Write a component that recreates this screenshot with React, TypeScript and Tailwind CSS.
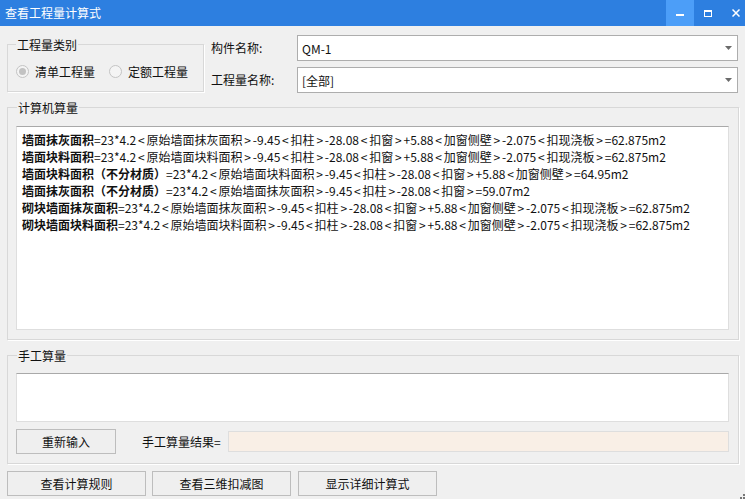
import React from "react";

const formulaLines: { name: string; expr: string }[] = [
  {
    name: "墙面抹灰面积",
    expr: "=23*4.2<原始墙面抹灰面积>-9.45<扣柱>-28.08<扣窗>+5.88<加窗侧壁>-2.075<扣现浇板>=62.875m2",
  },
  {
    name: "墙面块料面积",
    expr: "=23*4.2<原始墙面块料面积>-9.45<扣柱>-28.08<扣窗>+5.88<加窗侧壁>-2.075<扣现浇板>=62.875m2",
  },
  {
    name: "墙面块料面积（不分材质）",
    expr: "=23*4.2<原始墙面块料面积>-9.45<扣柱>-28.08<扣窗>+5.88<加窗侧壁>=64.95m2",
  },
  {
    name: "墙面抹灰面积（不分材质）",
    expr: "=23*4.2<原始墙面抹灰面积>-9.45<扣柱>-28.08<扣窗>=59.07m2",
  },
  {
    name: "砌块墙面抹灰面积",
    expr: "=23*4.2<原始墙面抹灰面积>-9.45<扣柱>-28.08<扣窗>+5.88<加窗侧壁>-2.075<扣现浇板>=62.875m2",
  },
  {
    name: "砌块墙面块料面积",
    expr: "=23*4.2<原始墙面块料面积>-9.45<扣柱>-28.08<扣窗>+5.88<加窗侧壁>-2.075<扣现浇板>=62.875m2",
  },
];

const Expr = ({ text }: { text: string }) => (
  <>
    {text.split(/([<>])/).map((part, i) =>
      part === "<" || part === ">" ? (
        <span key={i} className="px-[1.8px]">
          {part}
        </span>
      ) : (
        <span key={i}>{part}</span>
      )
    )}
  </>
);

const Caret = () => (
  <svg width="7" height="4" viewBox="0 0 7 4">
    <path d="M0 0h7L3.5 4z" fill="#6b6b6b" />
  </svg>
);

const Combo = ({ value }: { value: string }) => (
  <div className="w-[441px] h-[26px] bg-white border border-[#adadad] flex items-center pl-[4px] pr-[5px]">
    <span className="flex-1 text-[12px] leading-[17px] text-[#111]">{value}</span>
    <Caret />
  </div>
);

const Radio = ({ checked, label }: { checked?: boolean; label: string }) => (
  <div className="flex items-center h-[17px] whitespace-nowrap shrink-0">
    <span className="w-[13px] h-[13px] rounded-full border border-[#c4c4c4] bg-[#f4f4f4] flex items-center justify-center">
      {checked && <span className="w-[7px] h-[7px] rounded-full bg-[#c2c2c2]" />}
    </span>
    <span className="ml-[6px] text-[12px] text-[#111]">{label}</span>
  </div>
);

const Btn = ({ label, className }: { label: string; className: string }) => (
  <button
    className={
      "h-[25px] border border-[#bdbdbd] bg-[#efefef] text-[12px] text-[#111] flex items-center justify-center " +
      className
    }
  >
    {label}
  </button>
);

const App = () => {
  return (
    <div
      className="w-[745px] h-[499px] bg-[#f0f0f0] flex flex-col overflow-hidden relative"
      style={{ fontFamily: '"Microsoft YaHei", "Noto Sans CJK SC", sans-serif' }}
    >
      {/* title bar */}
      <div className="h-[26px] bg-[#2d7fe0] flex items-center shrink-0">
        <span className="pl-[5px] text-white text-[12px] flex-1">查看工程量计算式</span>
        <div className="w-[28px] h-[26px] bg-[#4c9ef8] flex items-center justify-center">
          <span className="w-[8px] h-[2px] bg-white mt-[4px]" />
        </div>
        <div className="w-[28px] h-[26px] flex items-center justify-center">
          <span className="w-[8px] h-[7px] border border-white border-t-2" />
        </div>
        <div className="w-[23px] h-[26px] flex items-center justify-end pr-[5px]">
          <svg width="8" height="8" viewBox="0 0 8 8">
            <path d="M0.5 0.5L7.5 7.5M7.5 0.5L0.5 7.5" stroke="#fff" strokeWidth="1.5" />
          </svg>
        </div>
      </div>

      <div className="flex flex-col px-[7px]">
        {/* top row */}
        <div className="flex items-start mt-[9px]">
          <fieldset className="w-[198px] h-[56px] mt-[1px] border border-[#d8d8d8] shadow-[1px_1px_0_#fff] pl-[8px]">
            <legend className="ml-[0px] px-[1px] text-[12px] leading-[17px] text-[#111]">工程量类别</legend>
            <div className="flex items-center mt-[10px] gap-[14px]">
              <Radio checked label="清单工程量" />
              <Radio label="定额工程量" />
            </div>
          </fieldset>
          <div className="flex flex-col ml-[7px] gap-[6px]">
            <div className="flex items-center">
              <span className="w-[86px] text-[12px] text-[#111]">构件名称:</span>
              <Combo value="QM-1" />
            </div>
            <div className="flex items-center">
              <span className="w-[86px] text-[12px] text-[#111]">工程量名称:</span>
              <Combo value="[全部]" />
            </div>
          </div>
        </div>

        {/* computed quantities */}
        <fieldset className="mt-[6px] w-[732px] h-[241px] border border-[#d8d8d8] shadow-[1px_1px_0_#fff] pl-[8px] pt-[10px]">
          <legend className="ml-[1px] px-[1px] text-[12px] leading-[17px] text-[#111]">计算机算量</legend>
          <div className="w-[713px] h-[204px] bg-white border border-[#dedede] border-t-[#a9a9a9] pl-[5px] pt-[4px]">
            {formulaLines.map((l, i) => (
              <div key={i} className="text-[12px] leading-[17px] text-[#111] whitespace-nowrap">
                <span className="font-bold">{l.name}</span>
                <Expr text={l.expr} />
              </div>
            ))}
          </div>
        </fieldset>

        {/* manual quantities */}
        <fieldset className="mt-[7px] w-[732px] h-[117px] border border-[#d8d8d8] shadow-[1px_1px_0_#fff] pl-[8px] pt-[9px]">
          <legend className="ml-[1px] px-[1px] text-[12px] leading-[17px] text-[#111]">手工算量</legend>
          <div className="w-[713px] h-[49px] bg-white border border-[#dedede] border-t-[#a9a9a9]" />
          <div className="flex items-center mt-[7px]">
            <Btn label="重新输入" className="w-[100px]" />
            <span className="ml-[26px] w-[80px] text-[12px] text-[#111]">手工算量结果=</span>
            <div className="ml-[6px] w-[501px] h-[21px] bg-[#f9efe6] border border-[#dedede]" />
          </div>
        </fieldset>

        {/* bottom buttons */}
        <div className="flex mt-[7px]">
          <Btn label="查看计算规则" className="w-[139px] h-[24px]" />
          <Btn label="查看三维扣减图" className="w-[139px] h-[24px] ml-[6px]" />
          <Btn label="显示详细计算式" className="w-[139px] h-[24px] ml-[7px]" />
        </div>
      </div>

      {/* resize grip */}
      <svg className="absolute right-0 bottom-0" width="6" height="6" viewBox="0 0 6 6">
        <rect x="4" y="1" width="2" height="2" fill="#777" />
        <rect x="1" y="4" width="2" height="2" fill="#777" />
        <rect x="4" y="4" width="2" height="2" fill="#777" />
      </svg>
    </div>
  );
};

export default App;
